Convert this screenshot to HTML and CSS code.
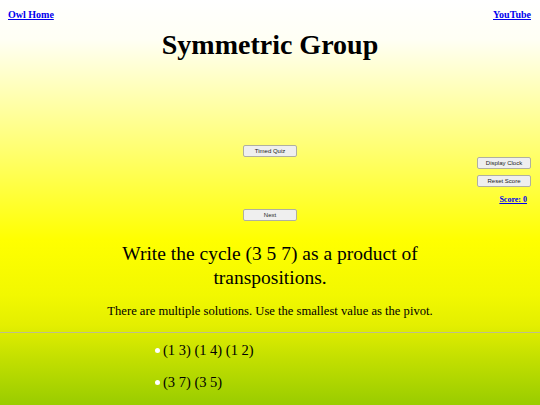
FILE: index.html
```html
<!DOCTYPE html>
<html>
<head>
<meta charset="utf-8">
<link rel="stylesheet" href="styles.css">
</head>
<body>
<div class="page">
  <div class="topbar">
    <a href="#" class="toplink">Owl Home</a>
    <a href="#" class="toplink">YouTube</a>
  </div>
  <h1 class="title">Symmetric Group</h1>
  <div class="controls">
    <div class="side"></div>
    <div class="center">
      <button class="btn">Timed Quiz</button>
      <button class="btn">Next</button>
    </div>
    <div class="side right">
      <button class="btn">Display Clock</button>
      <button class="btn">Reset Score</button>
      <a href="#" class="score">Score: 0</a>
    </div>
  </div>
  <p class="question">Write the cycle (3 5 7) as a product of transpositions.</p>
  <p class="hint">There are multiple solutions. Use the smallest value as the pivot.</p>
  <hr class="rule">
  <ul class="options">
    <li class="option"><span class="dot"></span><span class="math">(1 3) (1 4) (1 2)</span></li>
    <li class="option"><span class="dot"></span><span class="math">(3 7) (3 5)</span></li>
  </ul>
</div>
</body>
</html>
```

FILE: styles.css
```css
html, body {
  margin: 0;
  padding: 0;
}
body {
  font-family: "Liberation Serif", "Times New Roman", serif;
  color: #000;
}
.page {
  height: 405px;
  overflow: hidden;
  background: linear-gradient(to bottom, #ffffff 0px, #fffff4 40px, #ffff70 150px, #ffff00 240px, #f2f800 295px, #e4ef00 325px, #c6e100 355px, #99cc00 405px);
}
.topbar {
  display: flex;
  justify-content: space-between;
  padding: 9px 9px 0 8px;
  height: 14px;
}
.toplink {
  font-size: 10px;
  font-weight: bold;
  color: #0000ee;
  text-decoration: underline;
}
.title {
  margin: 6px 0 0;
  text-align: center;
  font-size: 28px;
  line-height: 32px;
  font-weight: bold;
}
.controls {
  display: grid;
  grid-template-columns: 1fr auto 1fr;
  margin-top: 84px;
}
.center {
  display: flex;
  flex-direction: column;
  gap: 52px;
  align-items: center;
}
.right {
  display: flex;
  flex-direction: column;
  align-items: flex-end;
  padding-top: 12px;
  padding-right: 9px;
  gap: 6px;
}
.btn {
  width: 54px;
  height: 12px;
  padding: 0;
  font-family: "Liberation Sans", Arial, sans-serif;
  font-size: 6px;
  line-height: 10px;
  color: #222;
  background: #efefef;
  border: 1px solid #b0b0a0;
  border-radius: 2px;
}
.score {
  margin-top: 2px;
  margin-right: 4px;
  font-size: 8px;
  font-weight: bold;
  color: #0000ee;
  text-decoration: underline;
}
.question {
  width: 320px;
  margin: 21px auto 0;
  text-align: center;
  font-size: 19.5px;
  line-height: 24px;
}
.hint {
  margin: 13px 0 0;
  text-align: center;
  font-size: 12.6px;
  line-height: 16px;
}
.rule {
  margin: 13px 0 0;
  border: 0;
  border-top: 1px solid #bdbf8a;
  height: 0;
}
.options {
  list-style: none;
  margin: 7px 0 0;
  padding: 0 0 0 155px;
}
.option {
  display: flex;
  align-items: center;
  height: 20px;
  margin-bottom: 12px;
  font-size: 14.5px;
}
.dot {
  width: 5px;
  height: 5px;
  border-radius: 50%;
  background: #ffffff;
  margin-right: 3px;
}
.math {
  font-family: "Liberation Serif", "DejaVu Serif", serif;
}
```
